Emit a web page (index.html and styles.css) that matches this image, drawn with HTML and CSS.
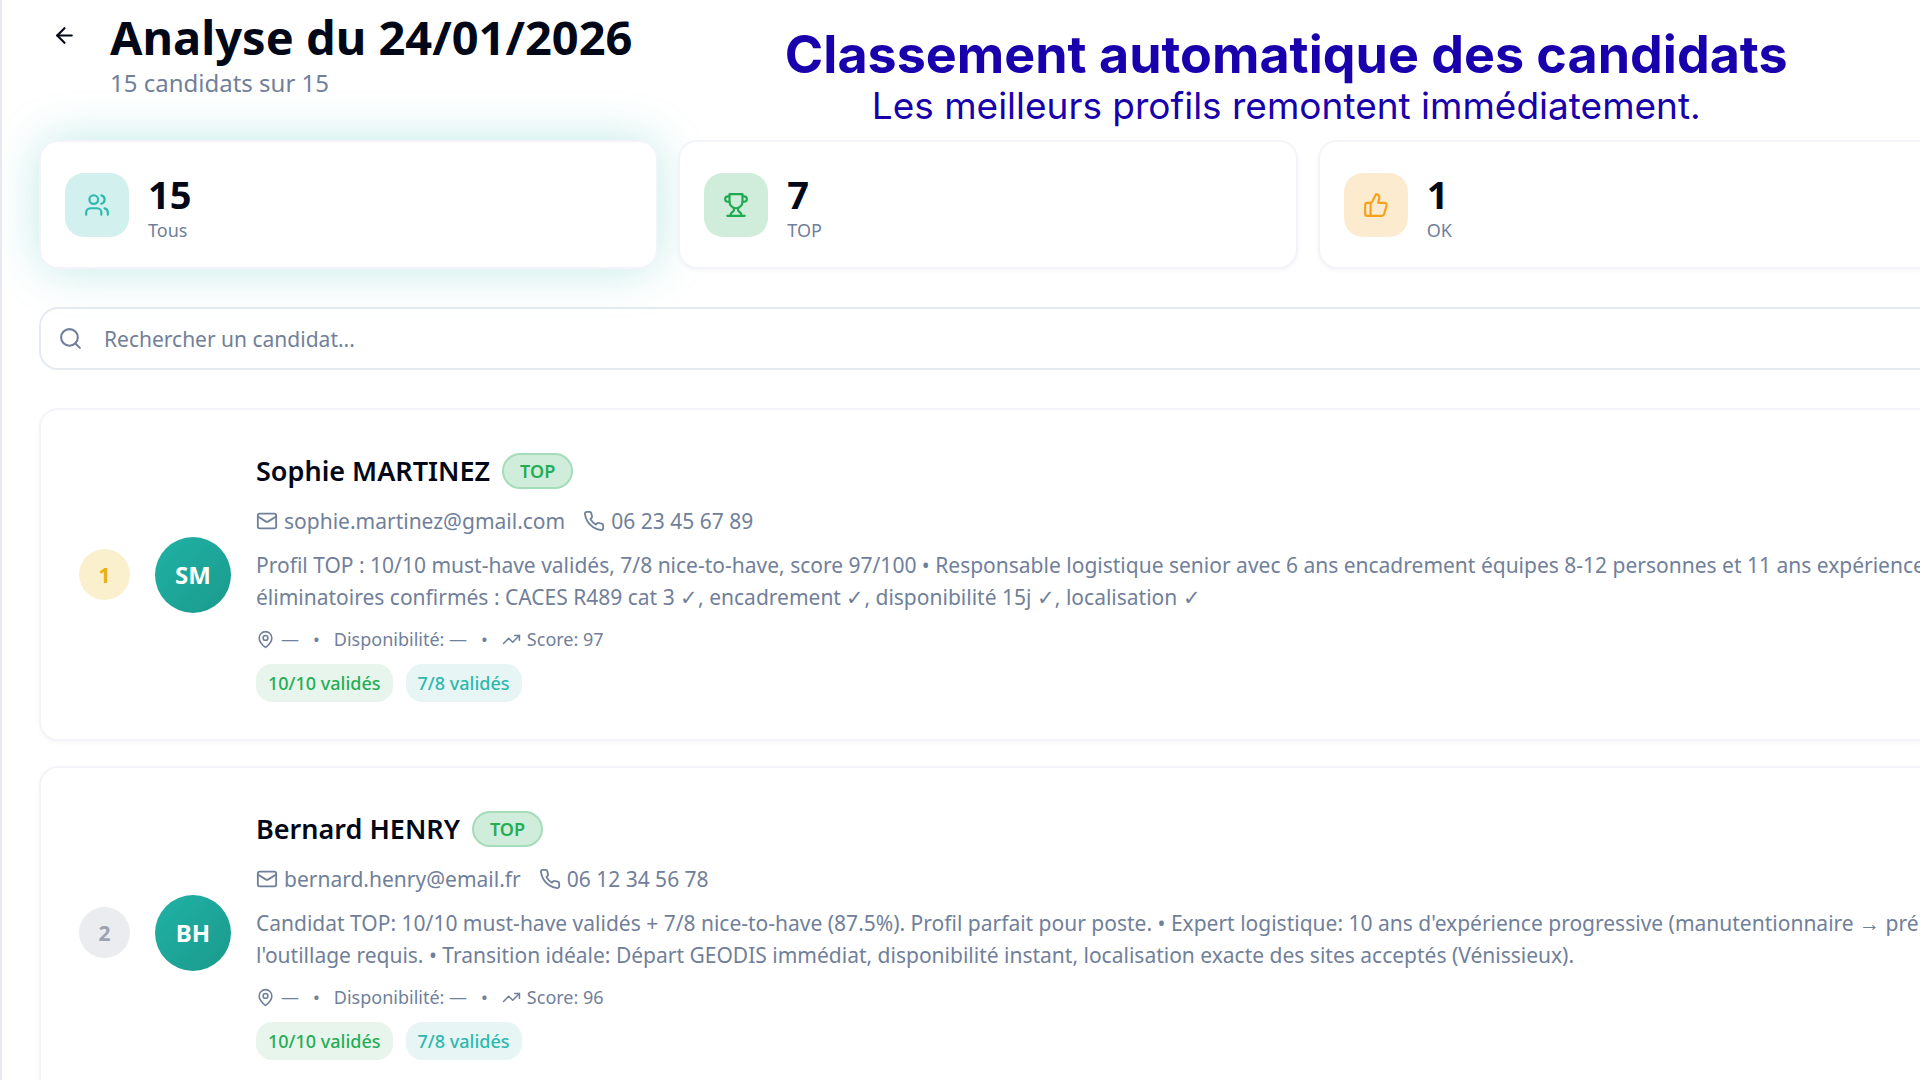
FILE: index.html
```html
<!DOCTYPE html>
<html lang="fr">
<head>
<meta charset="utf-8">
<title>Analyse du 24/01/2026</title>
<link rel="stylesheet" href="styles.css">
</head>
<body>
<svg class="sprite" aria-hidden="true">
  <symbol id="arrow-left" viewBox="0 0 24 24"><path d="m12 19-7-7 7-7"/><path d="M19 12H5"/></symbol>
  <symbol id="users" viewBox="0 0 24 24"><path d="M16 21v-2a4 4 0 0 0-4-4H6a4 4 0 0 0-4 4v2"/><circle cx="9" cy="7" r="4"/><path d="M22 21v-2a4 4 0 0 0-3-3.87"/><path d="M16 3.13a4 4 0 0 1 0 7.75"/></symbol>
  <symbol id="trophy" viewBox="0 0 24 24"><path d="M6 9H4.500a2.500 2.500 0 0 1 0-5H6"/><path d="M18 9h1.500a2.500 2.500 0 0 0 0-5H18"/><path d="M4 22h16"/><path d="M10 14.660V17c0 .55-.47.98-.97 1.210C7.850 18.750 7 20.240 7 22"/><path d="M14 14.660V17c0 .55.47.98.97 1.210C16.150 18.750 17 20.240 17 22"/><path d="M18 2H6v7a6 6 0 0 0 12 0V2Z"/></symbol>
  <symbol id="thumbs-up" viewBox="0 0 24 24"><path d="M7 10v12"/><path d="M15 5.880 14 10h5.830a2 2 0 0 1 1.920 2.560l-2.330 8A2 2 0 0 1 17.500 22H4a2 2 0 0 1-2-2v-8a2 2 0 0 1 2-2h2.760a2 2 0 0 0 1.790-1.110L12 2a3.130 3.130 0 0 1 3 3.880Z"/></symbol>
  <symbol id="search" viewBox="0 0 24 24"><circle cx="11" cy="11" r="8"/><path d="m21 21-4.300-4.300"/></symbol>
  <symbol id="mail" viewBox="0 0 24 24"><rect width="20" height="16" x="2" y="4" rx="2"/><path d="m22 7-8.970 5.700a1.940 1.940 0 0 1-2.060 0L2 7"/></symbol>
  <symbol id="phone" viewBox="0 0 24 24"><path d="M22 16.920v3a2 2 0 0 1-2.180 2 19.790 19.790 0 0 1-8.630-3.070 19.500 19.500 0 0 1-6-6 19.790 19.790 0 0 1-3.070-8.670A2 2 0 0 1 4.110 2h3a2 2 0 0 1 2 1.720c.127.960.361 1.903.7 2.810a2 2 0 0 1-.45 2.110L8.090 9.910a16 16 0 0 0 6 6l1.270-1.270a2 2 0 0 1 2.110-.45c.907.339 1.850.573 2.810.7A2 2 0 0 1 22 16.920z"/></symbol>
  <symbol id="pin" viewBox="0 0 24 24"><path d="M20 10c0 6-8 12-8 12s-8-6-8-12a8 8 0 0 1 16 0Z"/><circle cx="12" cy="10" r="3"/></symbol>
  <symbol id="trend" viewBox="0 0 24 24"><path d="m22 7-8.500 8.500-5-5L2 17"/><path d="M16 7h6v6"/></symbol>
</svg>

<div class="page">
  <header class="header">
    <button class="back" type="button" aria-label="Retour"><svg class="icon"><use href="#arrow-left"/></svg></button>
    <div class="heading">
      <h1 class="title">Analyse du 24/01/2026</h1>
      <p class="subtitle">15 candidats sur 15</p>
    </div>
    <div class="caption">
      <p class="caption-title">Classement automatique des candidats</p>
      <p class="caption-text">Les meilleurs profils remontent immédiatement.</p>
    </div>
  </header>

  <main class="content">
    <div class="stats">
      <button class="stat stat-active" type="button">
        <span class="stat-icon teal"><svg class="icon"><use href="#users"/></svg></span>
        <span class="stat-body"><span class="stat-value">15</span><span class="stat-label">Tous</span></span>
      </button>
      <button class="stat" type="button">
        <span class="stat-icon green"><svg class="icon"><use href="#trophy"/></svg></span>
        <span class="stat-body"><span class="stat-value">7</span><span class="stat-label">TOP</span></span>
      </button>
      <button class="stat" type="button">
        <span class="stat-icon orange"><svg class="icon"><use href="#thumbs-up"/></svg></span>
        <span class="stat-body"><span class="stat-value">1</span><span class="stat-label">OK</span></span>
      </button>
    </div>

    <label class="search">
      <svg class="icon"><use href="#search"/></svg>
      <input class="search-input" type="text" placeholder="Rechercher un candidat..." aria-label="Rechercher un candidat">
    </label>

    <article class="candidate">
      <span class="rank gold">1</span>
      <span class="avatar">SM</span>
      <div class="details">
        <div class="name-row"><h2 class="name">Sophie MARTINEZ</h2><span class="badge">TOP</span></div>
        <div class="contacts">
          <span class="contact"><svg class="icon"><use href="#mail"/></svg>sophie.martinez@gmail.com</span>
          <span class="contact"><svg class="icon"><use href="#phone"/></svg>06 23 45 67 89</span>
        </div>
        <p class="summary">Profil TOP : 10/10 must-have validés, 7/8 nice-to-have, score 97/100 • Responsable logistique senior avec 6 ans encadrement équipes 8-12 personnes et 11 ans expérience<br>éliminatoires confirmés : CACES R489 cat 3 ✓, encadrement ✓, disponibilité 15j ✓, localisation ✓</p>
        <div class="meta">
          <span class="meta-item"><svg class="icon"><use href="#pin"/></svg>—</span><span>•</span>
          <span>Disponibilité: —</span><span>•</span>
          <span class="meta-item"><svg class="icon"><use href="#trend"/></svg>Score: 97</span>
        </div>
        <div class="tags"><span class="tag tag-green">10/10 validés</span><span class="tag tag-teal">7/8 validés</span></div>
      </div>
    </article>

    <article class="candidate">
      <span class="rank silver">2</span>
      <span class="avatar">BH</span>
      <div class="details">
        <div class="name-row"><h2 class="name">Bernard HENRY</h2><span class="badge">TOP</span></div>
        <div class="contacts">
          <span class="contact"><svg class="icon"><use href="#mail"/></svg>bernard.henry@email.fr</span>
          <span class="contact"><svg class="icon"><use href="#phone"/></svg>06 12 34 56 78</span>
        </div>
        <p class="summary">Candidat TOP: 10/10 must-have validés + 7/8 nice-to-have (87.5%). Profil parfait pour poste. • Expert logistique: 10 ans d'expérience progressive (manutentionnaire → prép<br>l'outillage requis. • Transition idéale: Départ GEODIS immédiat, disponibilité instant, localisation exacte des sites acceptés (Vénissieux).</p>
        <div class="meta">
          <span class="meta-item"><svg class="icon"><use href="#pin"/></svg>—</span><span>•</span>
          <span>Disponibilité: —</span><span>•</span>
          <span class="meta-item"><svg class="icon"><use href="#trend"/></svg>Score: 96</span>
        </div>
        <div class="tags"><span class="tag tag-green">10/10 validés</span><span class="tag tag-teal">7/8 validés</span></div>
      </div>
    </article>
  </main>
</div>
</body>
</html>
```

FILE: styles.css
```css
* { box-sizing: border-box; }

html { overflow: hidden; }

body {
  margin: 0;
  background: #fff;
  color: #020817;
  font-family: "Noto Sans", "Open Sans", sans-serif;
  font-size: 21px;
  line-height: 32px;
}

h1, h2, p { margin: 0; }

button, input { font: inherit; color: inherit; }

.sprite { display: none; }

.icon {
  flex: none;
  width: 22px;
  height: 22px;
  fill: none;
  stroke: currentColor;
  stroke-width: 2;
  stroke-linecap: round;
  stroke-linejoin: round;
}

.page {
  height: 100vh;
  overflow: hidden;
  padding: 8px 0 0 37px;
  border-left: 2px solid #e8e9f0;
}

.header {
  display: flex;
  align-items: flex-start;
  margin-bottom: 10px;
}

.back {
  display: flex;
  align-items: center;
  justify-content: center;
  width: 51px;
  height: 54px;
  margin-right: 20px;
  padding: 0;
  border: 0;
  background: none;
}

.back .icon { width: 25px; height: 25px; }

.heading { flex: none; white-space: nowrap; }

.title { font-size: 47px; line-height: 58px; font-weight: 700; }

.subtitle { font-size: 24px; line-height: 34px; color: #71809a; }

.caption {
  flex: 1;
  padding: 20px 0 0 20px;
  text-align: center;
  white-space: nowrap;
  color: #1800ad;
  font-family: Inter, sans-serif;
}

.caption-title { font-size: 52px; line-height: 54px; font-weight: 700; }

.caption-text { font-size: 37px; line-height: 48px; }

/* The result area runs a little past the right edge of the window. */
.content {
  display: flex;
  flex-direction: column;
  gap: 25px;
  margin-right: -17px;
}

.stats {
  display: grid;
  grid-template-columns: repeat(3, 1fr);
  gap: 20px;
  margin-bottom: 13px;
}

.stat {
  display: flex;
  align-items: center;
  gap: 19px;
  height: 129px;
  padding: 0 24px;
  border: 2px solid #f3f4f9;
  border-radius: 19px;
  background: #fff;
  box-shadow: 0 2px 4px rgba(15, 23, 42, .03);
  text-align: left;
}

.stat-active { box-shadow: 0 0 48px rgba(32, 178, 166, .28); }

.stat-icon {
  display: flex;
  align-items: center;
  justify-content: center;
  width: 64px;
  height: 64px;
  border-radius: 19px;
}

.stat-icon .icon { width: 26px; height: 26px; }

.teal { background: #d2f0ed; color: #2cb9ad; }
.green { background: #d0eddb; color: #1fa951; }
.orange { background: #fdebd0; color: #f7a11b; }

.stat-body { display: flex; flex-direction: column; }

.stat-value { font-size: 38px; line-height: 50px; font-weight: 700; }

.stat-label { font-size: 18px; line-height: 22px; color: #71809a; }

.search {
  display: flex;
  align-items: center;
  gap: 21px;
  height: 63px;
  margin-bottom: 13px;
  padding: 0 17px;
  border: 2px solid #e5eaf1;
  border-radius: 19px;
  color: #71809a;
}

.search .icon { width: 25px; height: 25px; }

.search-input {
  flex: 1;
  padding: 0;
  border: 0;
  outline: 0;
  background: none;
}

.search-input::placeholder { color: #71809a; opacity: 1; }

.candidate {
  display: flex;
  align-items: center;
  gap: 25px;
  padding: 37px 38px;
  border: 2px solid #f3f4f9;
  border-radius: 19px;
  background: #fff;
  box-shadow: 0 2px 4px rgba(15, 23, 42, .03);
}

.rank, .avatar {
  display: flex;
  flex: none;
  align-items: center;
  justify-content: center;
  border-radius: 50%;
  font-weight: 700;
}

.rank { width: 51px; height: 51px; }

.gold { background: #fbf0ce; color: #eab010; }
.silver { background: #ebecef; color: #9ca3af; }

.avatar {
  width: 76px;
  height: 76px;
  background: linear-gradient(135deg, #20b2a6, #1a9a8c);
  color: #fff;
  font-size: 24px;
}

.details {
  display: flex;
  flex-direction: column;
  color: #71809a;
  white-space: nowrap;
}

.name-row { display: flex; align-items: center; gap: 12px; }

.name { font-size: 27px; line-height: 48px; font-weight: 600; color: #020817; }

.badge {
  padding: 0 16px;
  border: 2px solid #a5dcb9;
  border-radius: 18px;
  background: #d0eddb;
  color: #25ad56;
  font-size: 18px;
  line-height: 32px;
  font-weight: 600;
}

.contacts { display: flex; gap: 18px; margin-top: 10px; }

.contact { display: flex; align-items: center; gap: 6px; }

.summary { margin-top: 12px; }

.meta {
  display: flex;
  gap: 14px;
  margin-top: 13px;
  font-size: 18px;
  line-height: 26px;
}

.meta-item { display: flex; align-items: center; gap: 6px; }

.meta .icon { width: 19px; height: 19px; }

.tags { display: flex; gap: 13px; margin-top: 12px; }

.tag {
  padding: 0 12px;
  border-radius: 16px;
  font-size: 18px;
  line-height: 38px;
  font-weight: 500;
}

.tag-green { background: #e8f5ec; color: #25ad56; }
.tag-teal { background: #e7f6f5; color: #2cb9ad; }
```
